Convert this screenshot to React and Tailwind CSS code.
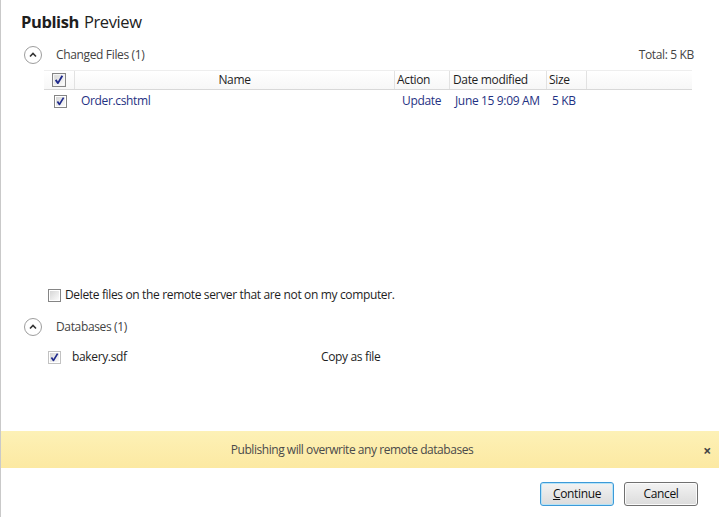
import React from "react";

const font = { fontFamily: '"Open Sans", "Liberation Sans", sans-serif' };

function Check({ checked = true, dotted = false, size = 13 }) {
  return (
    <svg width={size} height={size} viewBox="0 0 13 13" className="shrink-0">
      <defs>
        <linearGradient id="cbg" x1="0" y1="0" x2="1" y2="1">
          <stop offset="0" stopColor="#d6d6d6" />
          <stop offset="1" stopColor="#fbfbfb" />
        </linearGradient>
      </defs>
      <rect x="0.5" y="0.5" width="12" height="12" fill="#fff" stroke="#858585" strokeDasharray={dotted ? "1 1" : undefined} />
      <rect x="2" y="2" width="9" height="9" fill="url(#cbg)" />
      {checked && (
        <path d="M3.4 6.4 L5.5 9.4 L9.6 2.6" fill="none" stroke="#1f2a8c" strokeWidth="1.7" strokeLinejoin="round" />
      )}
    </svg>
  );
}

function Collapse() {
  return (
    <div className="w-[18px] h-[18px] rounded-full border border-[#9d9d9d] bg-white flex items-center justify-center">
      <svg width="8" height="6" viewBox="0 0 8 6">
        <path d="M1 4.5 L4 1.5 L7 4.5" fill="none" stroke="#333" strokeWidth="1.6" />
      </svg>
    </div>
  );
}

export default function App() {
  return (
    <div
      className="w-[719px] h-[517px] bg-white border-l border-[#c9c9c9] flex flex-col text-[12px] text-[#1e1e1e] overflow-hidden tracking-[-0.35px]"
      style={font}
    >
      <div className="h-[44px] flex items-center pl-[20px] text-[16.5px] tracking-[-0.4px]">
        <span className="font-bold">Publish</span>
        <span className="ml-[5px] text-[#222]">Preview</span>
      </div>

      <div className="h-[22px] flex items-center pl-[23px] pr-[25px]">
        <Collapse />
        <span className="ml-[14px] text-[#444]">Changed Files (1)</span>
        <span className="ml-auto text-[#444]">Total: 5 KB</span>
      </div>

      <div className="ml-[43px] w-[648px] mt-[4px]">
        <div className="h-[20px] flex border-t border-[#eeeeee] border-b border-b-[#d8d8d8] bg-gradient-to-b from-white to-[#f7f7f7]">
          <div className="w-[31px] border-r border-[#e2e2e2] flex items-center justify-center">
            <Check size={14} />
          </div>
          <div className="w-[320px] border-r border-[#e2e2e2] flex items-center justify-center">Name</div>
          <div className="w-[55px] border-r border-[#e2e2e2] flex items-center pl-[2px]">Action</div>
          <div className="w-[97px] border-r border-[#e2e2e2] flex items-center pl-[3px]">Date modified</div>
          <div className="w-[40px] border-r border-[#e2e2e2] flex items-center pl-[2px]">Size</div>
        </div>
        <div className="h-[21px] pt-[1px] flex items-center text-[#1f3283]">
          <div className="w-[38px] pl-[10px] flex">
            <Check />
          </div>
          <div className="w-[313px] -ml-[1px]">Order.cshtml</div>
          <div className="w-[55px] pl-[8px]">Update</div>
          <div className="w-[97px] pl-[6px]">June 15 9:09 AM</div>
          <div className="pl-[6px]">5 KB</div>
        </div>
      </div>

      <div className="h-[174px]" />

      <div className="h-[20px] flex items-center pl-[47px]">
        <Check checked={false} />
        <span className="ml-[4px]">Delete files on the remote server that are not on my computer.</span>
      </div>

      <div className="h-[22px] mt-[11px] flex items-center pl-[23px]">
        <Collapse />
        <span className="ml-[14px] text-[#444]">Databases (1)</span>
      </div>

      <div className="h-[20px] mt-[9px] flex items-center pl-[47px]">
        <Check dotted />
        <span className="ml-[11px] w-[249px]">bakery.sdf</span>
        <span>Copy as file</span>
      </div>

      <div className="h-[64px]" />

      <div className="h-[37px] flex items-center bg-gradient-to-b from-[#fdf1b6] to-[#fce9a2] relative">
        <span className="flex-1 text-center text-[#4a4a4a] tracking-[-0.45px] pr-[16px]">
          Publishing will overwrite any remote databases
        </span>
        <span className="absolute right-[8px] top-[9px] text-[14px] font-bold text-[#444]">×</span>
      </div>

      <div className="flex justify-end gap-[10px] pr-[21px] mt-[14px]">
        <button className="w-[74px] h-[24px] rounded-[3px] border border-[#3d9ad8] bg-gradient-to-b from-[#f3f3f3] to-[#dcdcdc] shadow-[inset_0_0_0_1px_#b6e3f7] text-[#111]">
          <span className="underline">C</span>ontinue
        </button>
        <button className="w-[74px] h-[24px] rounded-[3px] border border-[#707070] bg-gradient-to-b from-[#f3f3f3] to-[#dcdcdc] shadow-[inset_0_0_0_1px_#fbfbfb] text-[#111]">
          Cancel
        </button>
      </div>
    </div>
  );
}
